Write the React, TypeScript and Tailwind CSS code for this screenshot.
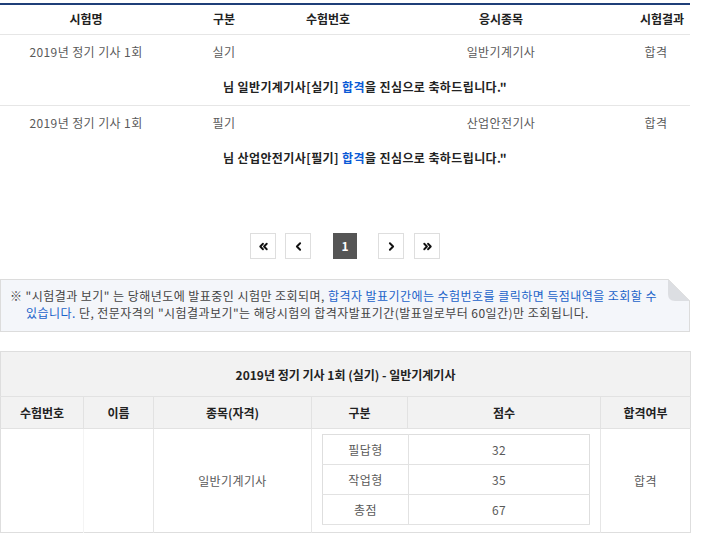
import { ChevronLeft, ChevronRight, ChevronsLeft, ChevronsRight } from "lucide-react";

const results = [
  { exam: "2019년 정기 기사 1회", type: "실기", no: "", item: "일반기계기사", result: "합격" },
  { exam: "2019년 정기 기사 1회", type: "필기", no: "", item: "산업안전기사", result: "합격" },
];

const scores = [
  { label: "필답형", score: "32" },
  { label: "작업형", score: "35" },
  { label: "총점", score: "67" },
];

function PageButton({ children, className = "" }: { children: React.ReactNode; className?: string }) {
  return (
    <button
      type="button"
      className={"flex h-[26px] w-[26px] items-center justify-center border border-[#dedede] bg-white text-[#111] " + className}
    >
      {children}
    </button>
  );
}

export default function App() {
  return (
    <div className="min-h-[534px] w-[720px] bg-white pt-[3px] font-['Noto_Sans_CJK_KR','Noto_Sans',sans-serif] text-[12px] text-[#5a5a5a]">
      {/* 합격자 목록 */}
      <table className="w-[690px] table-fixed border-collapse border-t-2 border-[#1f3f78]">
        <colgroup>
          <col className="w-[172px]" />
          <col className="w-[104px]" />
          <col className="w-[104px]" />
          <col className="w-[242px]" />
          <col className="w-[68px]" />
        </colgroup>
        <thead>
          <tr className="h-[30px] border-b border-[#e6e6e6]">
            <th className="font-bold text-[#222]">시험명</th>
            <th className="font-bold text-[#222]">구분</th>
            <th className="font-bold text-[#222]">수험번호</th>
            <th className="font-bold text-[#222]">응시종목</th>
            <th className="whitespace-nowrap pl-3 font-bold text-[#222]">시험결과</th>
          </tr>
        </thead>
        <tbody className="tracking-[0.4px]">
          {results.map((r, i) => (
            <>
              <tr key={"r" + i} className="h-[35px]">
                <td className="text-center">{r.exam}</td>
                <td className="text-center">{r.type}</td>
                <td className="text-center">{r.no}</td>
                <td className="text-center">{r.item}</td>
                <td className="text-center">{r.result}</td>
              </tr>
              <tr key={"m" + i} className={i === 0 ? "h-[36px] border-b border-[#e6e6e6]" : "h-[36px]"}>
                <td colSpan={5} className="pl-[40px] text-center font-bold text-[#222]">
                  님 {r.item}[{r.type}] <span className="text-[#0a5ad6]">합격</span>을 진심으로 축하드립니다."
                </td>
              </tr>
            </>
          ))}
        </tbody>
      </table>

      {/* 페이지 */}
      <div className="mt-[57px] flex w-[690px] justify-center">
        <PageButton>
          <ChevronsLeft size={13} strokeWidth={3.5} />
        </PageButton>
        <PageButton className="ml-[9px]">
          <ChevronLeft size={13} strokeWidth={3.5} />
        </PageButton>
        <button type="button" className="ml-[22px] flex h-[26px] w-[24px] items-center justify-center bg-[#555] font-bold text-white">
          1
        </button>
        <PageButton className="ml-[21px]">
          <ChevronRight size={13} strokeWidth={3.5} />
        </PageButton>
        <PageButton className="ml-[10px]">
          <ChevronsRight size={13} strokeWidth={3.5} />
        </PageButton>
      </div>

      {/* 안내 */}
      <div className="relative mt-[20px] h-[53px] w-[690px] border border-[#dcdcdc] bg-[#f4f6fa] pt-[7px] leading-[17px] tracking-[0.45px] text-[#444]">
        <p className="whitespace-nowrap pl-[9px]">
          ※ "시험결과 보기" 는 당해년도에 발표중인 시험만 조회되며,{" "}
          <span className="text-[#1a62c9]">합격자 발표기간에는 수험번호를 클릭하면 득점내역을 조회할 수</span>
        </p>
        <p className="whitespace-nowrap pl-[25px]">
          <span className="text-[#1a62c9]">있습니다.</span> 단, 전문자격의 "시험결과보기"는 해당시험의 합격자발표기간(발표일로부터 60일간)만 조회됩니다.
        </p>
        <svg className="absolute -right-px -top-px" width="23" height="23" viewBox="0 0 23 23">
          <polygon points="1,0 23,0 23,22" fill="#ffffff" />
          <path d="M1 0 L1 15 Q1 22 8 22 L23 22 Z" fill="#dcdee2" />
          <line x1="1" y1="0" x2="23" y2="22" stroke="#e0e0e0" strokeWidth="1" />
        </svg>
      </div>

      {/* 득점내역 */}
      <table className="mt-[19px] w-[690px] table-fixed border-collapse border border-[#dedede]">
        <colgroup>
          <col className="w-[83px]" />
          <col className="w-[70px]" />
          <col className="w-[158px]" />
          <col className="w-[96px]" />
          <col className="w-[193px]" />
          <col className="w-[90px]" />
        </colgroup>
        <thead>
          <tr className="h-[45px] bg-[#f2f2f2]">
            <th colSpan={6} className="border-b border-[#e2e2e2] pt-[2px] font-bold text-[#222]">
              2019년 정기 기사 1회 (실기) - 일반기계기사
            </th>
          </tr>
          <tr className="h-[32px] bg-[#f2f2f2]">
            <th className="border-r border-b border-[#e2e2e2] font-bold text-[#222]">수험번호</th>
            <th className="border-r border-b border-[#e2e2e2] font-bold text-[#222]">이름</th>
            <th className="border-r border-b border-[#e2e2e2] font-bold text-[#222]">종목(자격)</th>
            <th className="border-r border-b border-[#e2e2e2] font-bold text-[#222]">구분</th>
            <th className="border-r border-b border-[#e2e2e2] font-bold text-[#222]">점수</th>
            <th className="border-b border-[#e2e2e2] font-bold text-[#222]">합격여부</th>
          </tr>
        </thead>
        <tbody className="tracking-[0.4px]">
          <tr className="h-[103px]">
            <td className="border-r border-[#f4f4f4]"></td>
            <td className="border-r border-[#e6e6e6]"></td>
            <td className="border-r border-[#e6e6e6] text-center">일반기계기사</td>
            <td colSpan={2} className="border-r border-[#e6e6e6] px-[10px] pt-[5px] pb-[7px] align-top">
              <table className="w-full table-fixed border-collapse border border-[#dedede]">
                <colgroup>
                  <col className="w-[86px]" />
                  <col />
                </colgroup>
                <tbody>
                  {scores.map((s) => (
                    <tr key={s.label} className="h-[30px] border-b border-[#e2e2e2]">
                      <td className="border-r border-[#e2e2e2] text-center">{s.label}</td>
                      <td className="text-center">{s.score}</td>
                    </tr>
                  ))}
                </tbody>
              </table>
            </td>
            <td className="text-center">합격</td>
          </tr>
        </tbody>
      </table>
    </div>
  );
}
